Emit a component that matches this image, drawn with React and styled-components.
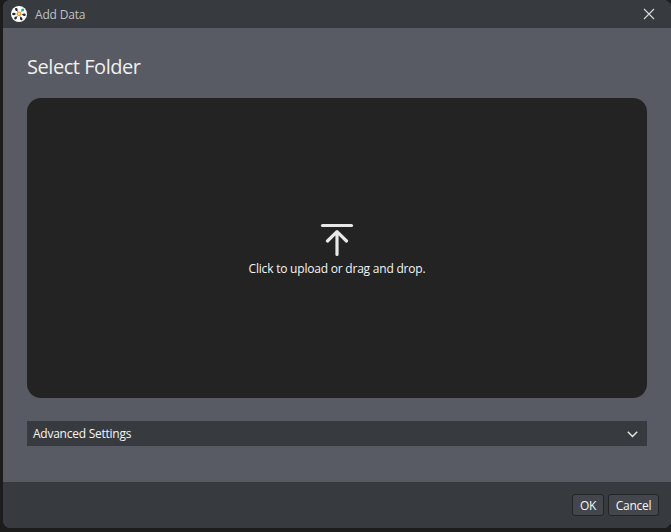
import React from "react";
import styled, { createGlobalStyle } from "styled-components";

const GlobalStyle = createGlobalStyle`
  * { box-sizing: border-box; }
  body {
    margin: 0;
    background: #1c1c1d;
    font-family: "Open Sans", "Noto Sans", sans-serif;
    overflow: hidden;
  }
`;

const Desktop = styled.div`
  height: 532px;
  padding: 0 0 4px 3px;
`;

const Dialog = styled.section`
  display: flex;
  flex-direction: column;
  width: 668px;
  height: 528px;
  overflow: hidden;
  border-radius: 8px;
  background: #585b63;
`;

const TitleBar = styled.header`
  display: flex;
  align-items: center;
  height: 28px;
  flex: none;
  padding: 0 16px 0 8px;
  background: #373a3e;
`;

const Label = styled.span`
  font-size: 12px;
  line-height: 16px;
  letter-spacing: ${(p) => p.$tracking || 0}px;
  color: ${(p) => p.$color || "#f5f5f5"};
  white-space: nowrap;
`;

const WindowTitle = styled(Label)`
  flex: 1;
  margin: 1px 0 0 8px;
`;

const IconButton = styled.button`
  display: flex;
  padding: 0;
  border: 0;
  background: none;
`;

const Content = styled.main`
  display: flex;
  flex-direction: column;
  flex: 1;
  padding: 25px 24px 0;
`;

const Heading = styled.h1`
  margin: 0;
  height: 45px;
  font-size: 20px;
  font-weight: 400;
  line-height: 28px;
  letter-spacing: -0.45px;
  color: #f0f0f0;
`;

const DropZone = styled.div`
  display: flex;
  flex-direction: column;
  align-items: center;
  height: 300px;
  padding-top: 125px;
  border-radius: 14px;
  background: #232324;
`;

const DropLabel = styled(Label)`
  margin-top: 4px;
`;

const Settings = styled.button`
  display: flex;
  align-items: center;
  justify-content: space-between;
  height: 25px;
  margin-top: 23px;
  padding: 1px 9px 0 6px;
  border: 0;
  background: #373a3e;
  font-family: inherit;
`;

const Footer = styled.footer`
  display: flex;
  justify-content: flex-end;
  gap: 4px;
  height: 46px;
  flex: none;
  padding: 12px 12px 0 0;
  background: #373a3e;
`;

const Button = styled.button`
  display: flex;
  align-items: center;
  justify-content: center;
  width: ${(p) => p.$width}px;
  height: 22px;
  padding: 2px 0 0;
  border: 1px solid #232425;
  border-radius: 3px;
  background: #43464d;
  font-family: inherit;
`;

const PETALS = [-30, -90, -140, 155, 98];

function AppLogo() {
  return (
    <svg width="16" height="16" viewBox="0 0 16 16">
      <circle cx="8" cy="8" r="8" fill="#fff" />
      {PETALS.map((angle) => (
        <g key={angle} transform={`rotate(${angle} 8 8)`}>
          <path d="M8 5.2V3" stroke="#24262b" strokeWidth="0.8" />
          <ellipse cx="8" cy="2.7" rx="1.25" ry="1.5" fill="#24262b" />
        </g>
      ))}
      <g transform="rotate(42 8 8)">
        <path d="M8 5.2V3" stroke="#22a595" strokeWidth="0.8" />
        <ellipse cx="8" cy="2.6" rx="1.4" ry="1.5" fill="#22a595" />
      </g>
      <circle cx="8" cy="7.8" r="1.7" fill="#fff" stroke="#f49a22" strokeWidth="1.3" />
    </svg>
  );
}

function CloseIcon() {
  return (
    <svg width="12" height="12" viewBox="0 0 12 12" fill="none" stroke="#d8d9da" strokeWidth="1.1">
      <path d="M1 1l10 10M11 1L1 11" />
    </svg>
  );
}

function UploadIcon() {
  return (
    <svg width="34" height="34" viewBox="0 0 34 34" fill="none" stroke="#e8e8e9" strokeLinecap="round" strokeLinejoin="round">
      <path d="M2.5 2.5h29" strokeWidth="3.2" />
      <path d="M17 31.5V9M7.5 18L17 8.7L26.5 18" strokeWidth="3.2" />
    </svg>
  );
}

function ChevronIcon() {
  return (
    <svg width="11" height="7" viewBox="0 0 11 7" fill="none" stroke="#e8e8e9" strokeWidth="1.4">
      <path d="M0.8 0.8l4.7 4.7l4.7-4.7" />
    </svg>
  );
}

export default function App() {
  return (
    <>
      <GlobalStyle />
      <Desktop>
        <Dialog role="dialog" aria-label="Add Data">
          <TitleBar>
            <AppLogo />
            <WindowTitle $color="#bfc1c4" $tracking={-0.18}>Add Data</WindowTitle>
            <IconButton aria-label="Close"><CloseIcon /></IconButton>
          </TitleBar>
          <Content>
            <Heading>Select Folder</Heading>
            <DropZone>
              <UploadIcon />
              <DropLabel $tracking={-0.21}>Click to upload or drag and drop.</DropLabel>
            </DropZone>
            <Settings>
              <Label $tracking={-0.25}>Advanced Settings</Label>
              <ChevronIcon />
            </Settings>
          </Content>
          <Footer>
            <Button $width={32}><Label $tracking={-0.3}>OK</Label></Button>
            <Button $width={51}><Label $tracking={-0.3}>Cancel</Label></Button>
          </Footer>
        </Dialog>
      </Desktop>
    </>
  );
}
